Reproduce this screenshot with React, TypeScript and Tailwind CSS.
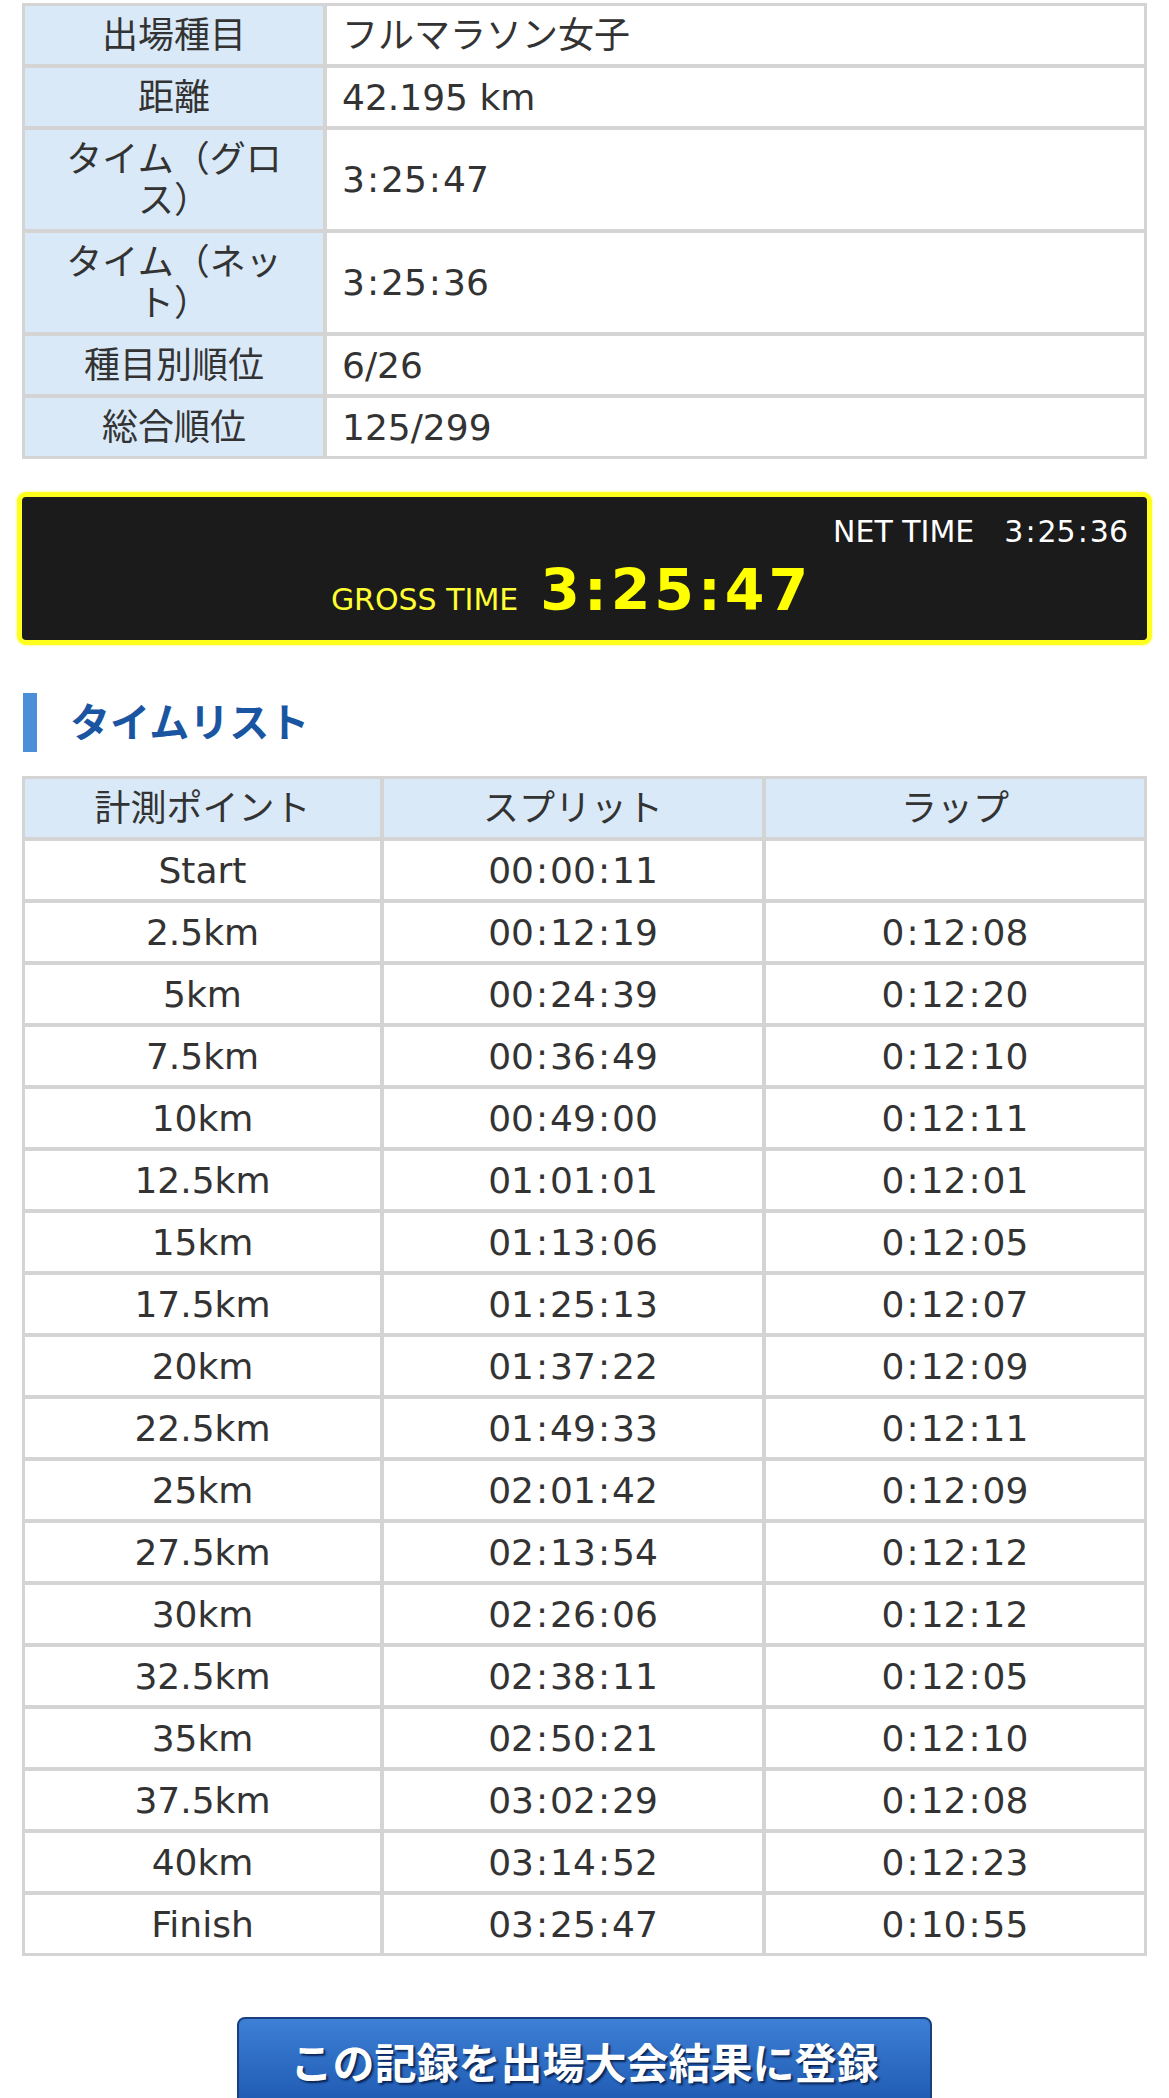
import React from "react";

const info: [React.ReactNode, string, string][] = [
  ["出場種目", "フルマラソン女子", "a"],
  ["距離", "42.195 km", "b"],
  [
    <>
      タイム（グロ
      <br />
      ス）
    </>,
    "3:25:47",
    "c",
  ],
  [
    <>
      タイム（ネッ
      <br />
      ト）
    </>,
    "3:25:36",
    "d",
  ],
  ["種目別順位", "6/26", "e"],
  ["総合順位", "125/299", "f"],
];

const splits: [string, string, string][] = [
  ["Start", "00:00:11", ""],
  ["2.5km", "00:12:19", "0:12:08"],
  ["5km", "00:24:39", "0:12:20"],
  ["7.5km", "00:36:49", "0:12:10"],
  ["10km", "00:49:00", "0:12:11"],
  ["12.5km", "01:01:01", "0:12:01"],
  ["15km", "01:13:06", "0:12:05"],
  ["17.5km", "01:25:13", "0:12:07"],
  ["20km", "01:37:22", "0:12:09"],
  ["22.5km", "01:49:33", "0:12:11"],
  ["25km", "02:01:42", "0:12:09"],
  ["27.5km", "02:13:54", "0:12:12"],
  ["30km", "02:26:06", "0:12:12"],
  ["32.5km", "02:38:11", "0:12:05"],
  ["35km", "02:50:21", "0:12:10"],
  ["37.5km", "03:02:29", "0:12:08"],
  ["40km", "03:14:52", "0:12:23"],
  ["Finish", "03:25:47", "0:10:55"],
];

const font = "font-['DejaVu_Sans','Noto_Sans_CJK_JP',sans-serif]";

// Renders a time value with slightly wider colons (Verdana-like spacing)
function T({ v }: { v: string }) {
  const parts = v.split(":");
  return (
    <>
      {parts.map((p, i) => (
        <React.Fragment key={i}>
          {i > 0 && <span className="mx-[2px]">:</span>}
          {p}
        </React.Fragment>
      ))}
    </>
  );
}

export default function App() {
  return (
    <div lang="ja" className={`${font} bg-white text-[#333333] pt-[3px] pb-[40px] w-[1169px]`}>
      {/* Info table */}
      <div className="mx-[22px] bg-[#d4d4d4] p-[3px] grid grid-cols-[298px_1fr] gap-[4px] text-[36px] leading-[41px]">
        {info.map(([k, v, id]) => (
          <React.Fragment key={id}>
            <div className="bg-[#d9e9f8] px-[10px] py-[8.5px] flex items-center justify-center text-center">
              <span>{k}</span>
            </div>
            <div className="bg-white pl-[15px] pr-[15px] py-[8.5px] flex items-center">
              <T v={v} />
            </div>
          </React.Fragment>
        ))}
      </div>

      {/* Time box */}
      <div className="mx-[17px] mt-[33px] border-[5px] border-[#ffff1e] rounded-[9px] bg-[#1b1b1b] shadow-[0_0_3px_#ffff66] pt-[17px] pb-[22px]">
        <div className="flex justify-end pr-[19px] text-white text-[30px] leading-[36px]">
          <span>NET TIME</span>
          <span className="ml-[30px]">
            <T v="3:25:36" />
          </span>
        </div>
        <div className="mt-[12px] flex items-baseline justify-center pr-[26px]">
          <span className="text-[30px] leading-[36px] text-[#ffff33]">GROSS TIME</span>
          <span className="ml-[22px] text-[57px] leading-[56px] font-bold tracking-[4px] text-[#ffff00]">
            3:25:47
          </span>
        </div>
      </div>

      {/* Heading */}
      <div className="mt-[48px] ml-[23px] flex items-center">
        <div className="w-[14px] h-[59px] bg-[#4a8fd7]" />
        <h2 className="ml-[33px] text-[40px] leading-[50px] font-bold text-[#1a55a1]">タイムリスト</h2>
      </div>

      {/* Split table */}
      <div className="mx-[22px] mt-[24px] bg-[#d4d4d4] p-[3px] grid grid-cols-[355px_1fr_1fr] gap-[4px] text-[36px] leading-[41px] text-center">
        <div className="bg-[#d9e9f8] py-[8.5px]">計測ポイント</div>
        <div className="bg-[#d9e9f8] py-[8.5px]">スプリット</div>
        <div className="bg-[#d9e9f8] py-[8.5px]">ラップ</div>
        {splits.map(([p, s, l]) => (
          <React.Fragment key={p}>
            <div className="bg-white py-[8.5px]">{p}</div>
            <div className="bg-white py-[8.5px]">
              <T v={s} />
            </div>
            <div className="bg-white py-[8.5px] min-h-[58px]">{l && <T v={l} />}</div>
          </React.Fragment>
        ))}
      </div>

      {/* Button */}
      <div className="mt-[61px] flex justify-center">
        <button className="w-[695px] rounded-[8px] border-2 border-[#1a3f80] bg-linear-to-b from-[#3d80d6] to-[#1c55ad] pt-[14px] pb-[18px] text-white text-[42px] leading-[63px] font-bold [text-shadow:2px_2px_2px_rgba(0,20,60,0.8)]">
          この記録を出場大会結果に登録
        </button>
      </div>
    </div>
  );
}
